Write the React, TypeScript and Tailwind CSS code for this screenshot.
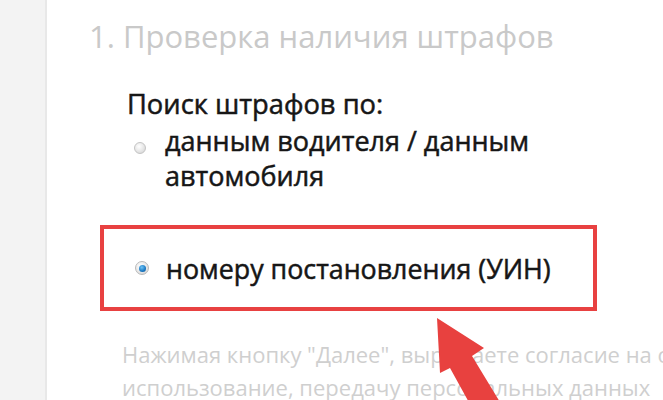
import React from "react";

function RadioOff() {
  return (
    <span className="inline-block h-[12px] w-[12px] shrink-0 rounded-full border border-[#c4c4c4] bg-[radial-gradient(circle_at_40%_35%,#ffffff_0%,#e6e6e6_55%,#cfcfcf_100%)]" />
  );
}

function RadioOn() {
  return (
    <span className="flex h-[14px] w-[14px] shrink-0 items-center justify-center rounded-full border border-[#b9b9b9] bg-[radial-gradient(circle_at_40%_35%,#ffffff_0%,#e4e4e4_60%,#cacaca_100%)]">
      <span className="h-[7px] w-[7px] rounded-full bg-[radial-gradient(circle_at_40%_35%,#6ec3f5_0%,#1a78c2_60%,#0b4f8a_100%)]" />
    </span>
  );
}

export default function App() {
  return (
    <div className="relative flex h-[400px] w-[663px] overflow-hidden bg-white font-['Open_Sans',sans-serif]">
      <div className="w-[47px] shrink-0 border-r-2 border-[#e8e8e8] bg-[#f3f3f3]" />
      <div className="flex-1 pl-[42px] pt-[15px]">
        <h1 className="whitespace-nowrap text-[31px] leading-[42px] font-normal text-[#c9c9c9]">
          1. Проверка наличия штрафов
        </h1>
        <div className="pl-[38px] pt-[30px]">
          <p className="whitespace-nowrap text-[27.3px] leading-[34px] text-[#161616] [-webkit-text-stroke:0.5px_#161616]">
            Поиск штрафов по:
          </p>
          <div className="mt-[2px] flex items-start gap-[19px] pl-[7px]">
            <span className="pt-[13px]">
              <RadioOff />
            </span>
            <span className="whitespace-nowrap text-[27px] leading-[35px] text-[#161616] [-webkit-text-stroke:0.5px_#161616]">
              данным водителя / данным
              <br />
              автомобиля
            </span>
          </div>
        </div>
        <div className="ml-[11px] mt-[32px] flex h-[86px] w-[497px] items-center gap-[17px] border-[4px] border-[#e84141] pl-[31px]">
          <RadioOn />
          <span className="whitespace-nowrap text-[26.8px] leading-[35px] text-[#161616] [-webkit-text-stroke:0.5px_#161616]">
            номеру постановления (УИН)
          </span>
        </div>
        <p className="mt-[27px] whitespace-nowrap pl-[33px] text-[22px] leading-[33px] text-[#cfcfcf]">
          Нажимая кнопку "Далее", выражаете согласие на обработку,
          <br />
          использование, передачу персональных данных
        </p>
      </div>
      <svg
        className="pointer-events-none absolute left-0 top-0"
        width="663"
        height="400"
        viewBox="0 0 663 400"
      >
        <polygon
          points="437,318 484,348 472,356 506,412 482,426 450,368 440,373"
          fill="#e8413f"
        />
      </svg>
    </div>
  );
}
